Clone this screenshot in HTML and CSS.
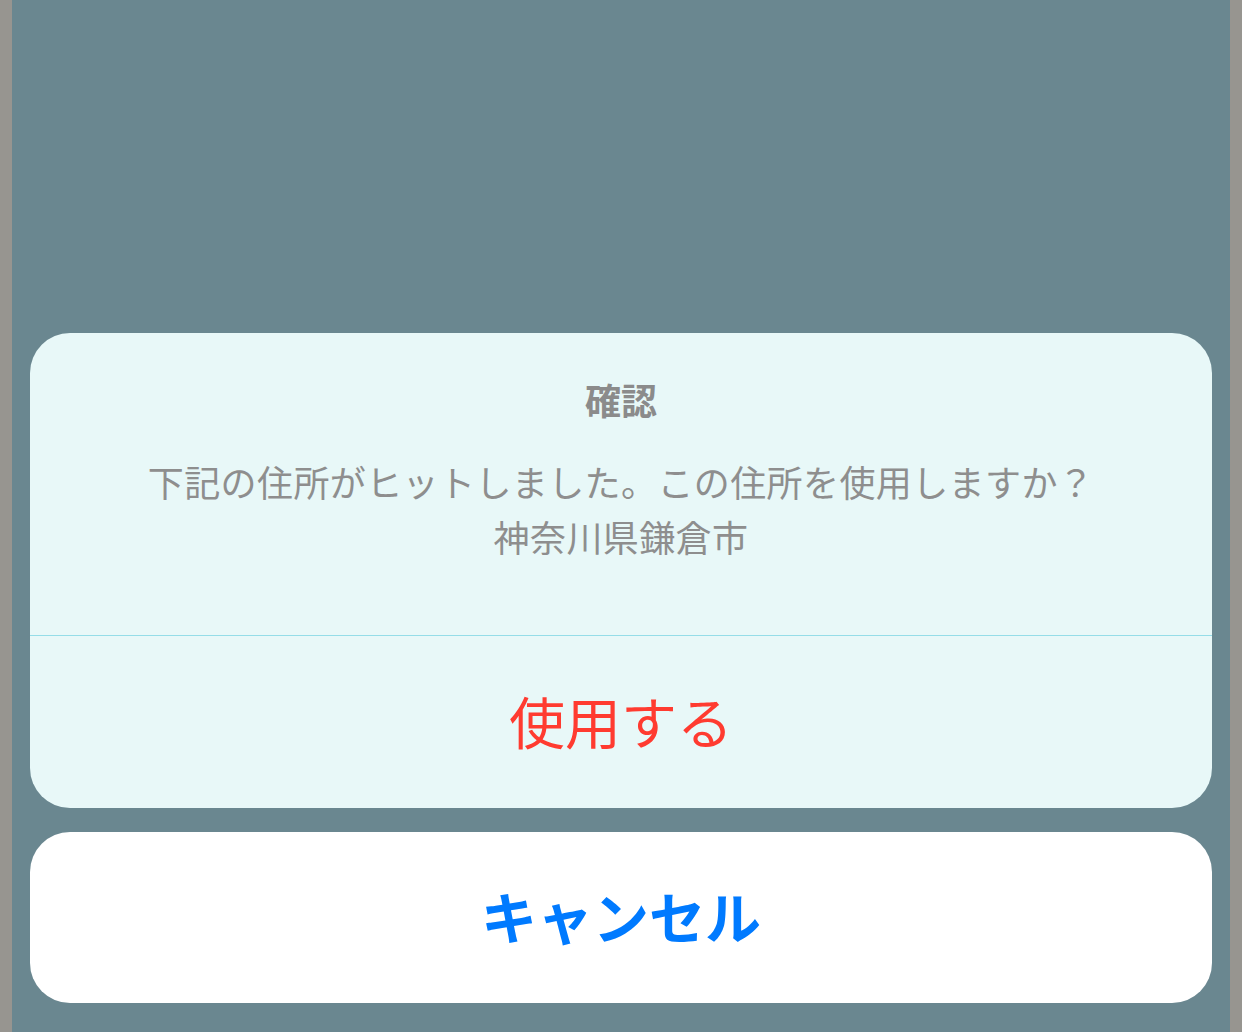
FILE: index.html
```html
<!DOCTYPE html>
<html lang="ja">
<head>
<meta charset="utf-8">
<title>確認</title>
<link rel="stylesheet" href="styles.css">
</head>
<body>
<div class="screen">
  <div class="edge"></div>
  <main class="stage">
    <section class="sheet">
      <div class="sheet-head">
        <h1 class="sheet-title">確認</h1>
        <p class="sheet-msg">下記の住所がヒットしました。この住所を使用しますか？<br>神奈川県鎌倉市</p>
      </div>
      <button class="sheet-btn danger">使用する</button>
    </section>
    <button class="cancel">キャンセル</button>
  </main>
  <div class="edge"></div>
</div>
</body>
</html>
```
FILE: styles.css
```css
html, body {
  margin: 0;
  padding: 0;
  height: 100%;
}
body {
  font-family: "Noto Sans CJK JP", "Noto Sans", sans-serif;
  background: #6a8790;
}
.screen {
  display: flex;
  height: 1032px;
}
.edge {
  width: 12px;
  background: #979590;
  flex: none;
}
.stage {
  flex: 1;
  display: flex;
  flex-direction: column;
  justify-content: flex-end;
  gap: 24px;
  padding: 0 18px 29px;
  background: #6a8790;
}
.sheet {
  background: #e8f8f8;
  border-radius: 40px;
  overflow: hidden;
  display: flex;
  flex-direction: column;
}
.sheet-head {
  height: 303px;
  box-sizing: border-box;
  padding-top: 44px;
  border-bottom: 1px solid #95dde8;
  text-align: center;
}
.sheet-title {
  margin: 0;
  font-size: 36px;
  font-weight: 700;
  line-height: 44px;
  color: #8b8b8b;
}
.sheet-msg {
  margin: 33px 0 0;
  font-size: 36px;
  font-weight: 400;
  line-height: 55px;
  letter-spacing: 0.4px;
  color: #8e8e8e;
}
.sheet-btn {
  height: 172px;
  border: 0;
  background: transparent;
  font-family: inherit;
  font-size: 56px;
  line-height: 1;
  padding: 0 0 4px;
}
.danger {
  color: #ff3b30;
}
.cancel {
  height: 171px;
  border: 0;
  border-radius: 40px;
  background: #ffffff;
  font-family: inherit;
  font-size: 56px;
  font-weight: 700;
  line-height: 1;
  color: #007aff;
  padding: 0 0 6px;
}
```
